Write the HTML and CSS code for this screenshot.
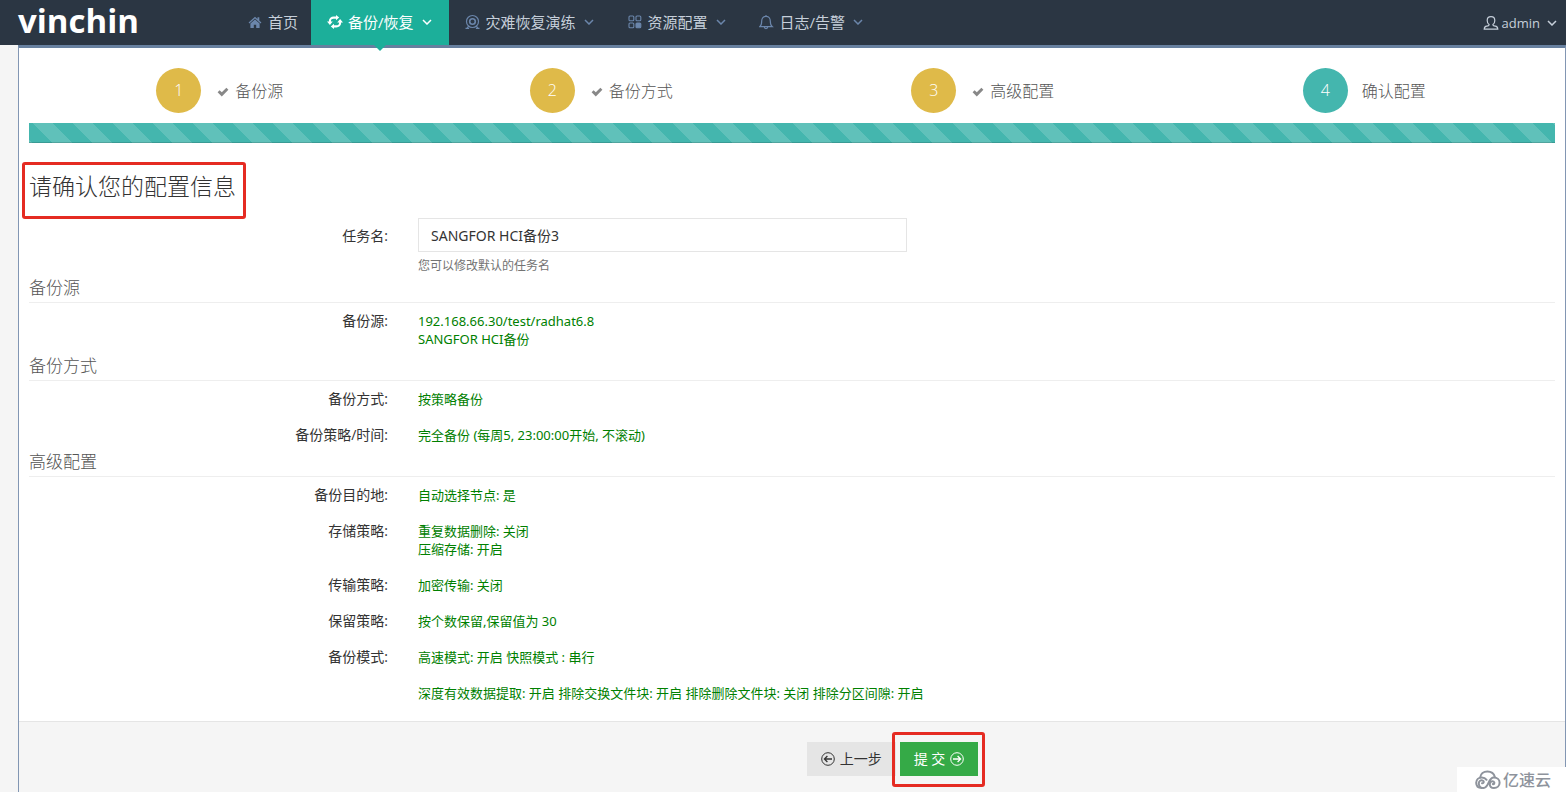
FILE: index.html
```html
<!DOCTYPE html>
<html lang="zh-CN">
<head>
<meta charset="utf-8">
<meta name="viewport" content="width=device-width, initial-scale=1">
<title>vinchin</title>
<link rel="stylesheet" href="styles.css">
</head>
<body>
<svg class="defs" aria-hidden="true">
  <symbol id="chev" viewBox="0 0 10 6"><path d="M1 1l4 4 4-4" fill="none" stroke="currentColor" stroke-width="1.5"/></symbol>
  <symbol id="check" viewBox="0 0 12 10"><path d="M0.6 5.2L2.6 3.2L4.8 5.3L9.4 0.7L11.4 2.7L4.8 9.4Z" fill="currentColor"/></symbol>
</svg>
<header class="topbar">
  <a class="logo" href="#">vinchin</a>
  <nav class="menu">
    <a class="menu-item home" href="#">
      <svg class="icon" viewBox="0 0 16 16"><path d="M7 2.8L0.6 8.4L1.4 9.4L7 4.6L12.6 9.4L13.4 8.4L11.3 6.5V3.2H9.5V5ZM7 5.6L2.4 9.6V14H5.8V10.8H8.2V14H11.6V9.6Z" fill="currentColor"/></svg>
      <span>首页</span>
    </a>
    <a class="menu-item active" href="#">
      <svg class="icon" viewBox="0 0 16 16"><path d="M2.9 8.2V7C2.9 4.8 4.6 3.6 6.6 3.6H9.6M13.1 7.8V9C13.1 11.2 11.4 12.4 9.4 12.4H6.4" fill="none" stroke="currentColor" stroke-width="2.1"/><path d="M0 7.6H5.8L2.9 11ZM16 8.4H10.2L13.1 5ZM9 1V6.2L12.2 3.6ZM7 15V9.8L3.8 12.4Z" fill="currentColor"/></svg>
      <span>备份/恢复</span>
      <svg class="chev"><use href="#chev"/></svg>
    </a>
    <a class="menu-item" href="#">
      <svg class="icon" viewBox="0 0 16 16" fill="none" stroke="currentColor" stroke-width="1.2"><circle cx="7.5" cy="7.5" r="6"/><circle cx="7.5" cy="7.5" r="2.8" stroke-width="1.6"/><path d="M3.7 12L1.9 14.4M11.3 12L13.1 14.4M0.5 14.4H4.1M10.9 14.4H14.5"/></svg>
      <span>灾难恢复演练</span>
      <svg class="chev"><use href="#chev"/></svg>
    </a>
    <a class="menu-item" href="#">
      <svg class="icon" viewBox="0 0 16 16" fill="none" stroke="currentColor" stroke-width="1.1"><rect x="2" y="2" width="4.8" height="4.8" rx="1"/><rect x="9" y="2" width="4.8" height="4.8" rx="1"/><rect x="2" y="9" width="4.8" height="4.8" rx="1"/><rect x="9" y="9" width="4.8" height="4.8" rx="1" fill="currentColor"/></svg>
      <span>资源配置</span>
      <svg class="chev"><use href="#chev"/></svg>
    </a>
    <a class="menu-item" href="#">
      <svg class="icon" viewBox="0 0 16 16" fill="none" stroke="currentColor" stroke-width="1.2"><path d="M0.9 12.6C2.5 11.4 2.7 9.6 2.7 7C2.7 4.2 4.4 2.3 7 2.3S11.3 4.2 11.3 7C11.3 9.6 11.5 11.4 13.1 12.6ZM7 2.3V1M5.2 12.8C5.4 15.3 8.6 15.3 8.8 12.8"/></svg>
      <span>日志/告警</span>
      <svg class="chev"><use href="#chev"/></svg>
    </a>
  </nav>
  <a class="user" href="#">
    <svg class="icon" viewBox="0 0 16 16" fill="none" stroke="currentColor" stroke-width="1.2"><path d="M6.1 9.6C4.8 8.7 4.2 7.2 4.2 5.4C4.2 3 5.7 1.6 8 1.6S11.8 3 11.8 5.4C11.8 7.2 11.2 8.7 9.9 9.6C9.8 10.6 10.6 11 12.4 11.2C14 11.4 14.6 12 14.8 14.2H1.2C1.4 12 2 11.4 3.6 11.2C5.4 11 6.2 10.6 6.1 9.6Z"/></svg>
    <span>admin</span>
    <svg class="chev"><use href="#chev"/></svg>
  </a>
</header>

<main class="wizard">
  <div class="body">
    <ol class="steps">
      <li class="step"><span class="num">1</span><svg class="check"><use href="#check"/></svg><span>备份源</span></li>
      <li class="step"><span class="num">2</span><svg class="check"><use href="#check"/></svg><span>备份方式</span></li>
      <li class="step"><span class="num">3</span><svg class="check"><use href="#check"/></svg><span>高级配置</span></li>
      <li class="step current"><span class="num">4</span><span>确认配置</span></li>
    </ol>
    <div class="progress"></div>

    <h3 class="title"><span class="marked">请确认您的配置信息</span></h3>

    <form id="confirm">
      <div class="row name-row">
        <label class="label" for="task">任务名:</label>
        <div class="value">
          <input class="text" id="task" type="text" value="SANGFOR HCI备份3">
          <p class="help">您可以修改默认的任务名</p>
        </div>
      </div>

      <h4 class="section">备份源</h4>
      <div class="row"><div class="label">备份源:</div><div class="value">192.168.66.30/test/radhat6.8<br>SANGFOR HCI备份</div></div>

      <h4 class="section">备份方式</h4>
      <div class="row"><div class="label">备份方式:</div><div class="value">按策略备份</div></div>
      <div class="row"><div class="label">备份策略/时间:</div><div class="value">完全备份 (每周5, 23:00:00开始, 不滚动)</div></div>

      <h4 class="section">高级配置</h4>
      <div class="row"><div class="label">备份目的地:</div><div class="value">自动选择节点: 是</div></div>
      <div class="row"><div class="label">存储策略:</div><div class="value">重复数据删除: 关闭<br>压缩存储: 开启</div></div>
      <div class="row"><div class="label">传输策略:</div><div class="value">加密传输: 关闭</div></div>
      <div class="row"><div class="label">保留策略:</div><div class="value">按个数保留,保留值为 30</div></div>
      <div class="row"><div class="label">备份模式:</div><div class="value">高速模式: 开启 快照模式 : 串行</div></div>
      <div class="row"><div class="label"></div><div class="value">深度有效数据提取: 开启 排除交换文件块: 开启 排除删除文件块: 关闭 排除分区间隙: 开启</div></div>
    </form>
  </div>
  <footer class="actions">
    <button class="btn" type="button">
      <svg class="arrow" viewBox="0 0 14 14" fill="none" stroke="currentColor"><circle cx="7" cy="7" r="6.3"/><path d="M11 7H3.4M6.4 4L3.4 7L6.4 10" stroke-width="1.3"/></svg>
      <span>上一步</span>
    </button>
    <span class="marked">
      <button class="btn submit" type="submit" form="confirm">
        <span>提 交</span>
        <svg class="arrow" viewBox="0 0 14 14" fill="none" stroke="currentColor"><circle cx="7" cy="7" r="6.3"/><path d="M3 7H10.6M7.6 4L10.6 7L7.6 10" stroke-width="1.3"/></svg>
      </button>
    </span>
  </footer>
</main>

<div class="brand">
  <svg class="cloud" viewBox="0 0 26 20" fill="none" stroke="currentColor" stroke-width="2" stroke-linecap="round"><path d="M5.2 7.4C5.6 3.8 8.6 1.4 12.4 1.4C16.2 1.4 19 3.6 19.8 6.8"/><path d="M7 13.2C8.6 13.6 9.6 11.6 7.8 10.6C5.8 9.6 3.8 11 3.8 13.4C3.8 16 6 18 8.6 18C14 18 13 7.6 18.8 7.6C22.2 7.6 24.6 9.8 24.6 12.8C24.6 16 22 18 19 18C16.4 18 14.8 16.4 14.8 14.2C14.8 11.8 17 10.6 18.6 11.6C20.2 12.8 19 14.6 17.8 14"/><path d="M11.6 9.8C10.6 8.4 8.8 7.4 6.8 7.4C3.6 7.4 1.2 9.8 1.2 12.8C1.2 15.6 3 18 6.8 18"/></svg>
  <span>亿速云</span>
</div>
</body>
</html>
```
FILE: styles.css
```css
* {
  box-sizing: border-box;
}

body {
  margin: 0;
  min-height: 100vh;
  display: flex;
  flex-direction: column;
  background: #f5f5f5;
  color: #333;
  font: 14px/18px "Open Sans", "Noto Sans CJK SC", sans-serif;
}

a {
  color: inherit;
  text-decoration: none;
}

.defs {
  position: absolute;
  width: 0;
  height: 0;
}

/* top bar */
.topbar {
  display: flex;
  height: 45px;
  background: #2b3643;
}

.logo {
  width: 236px;
  padding-left: 18px;
  color: #fff;
  font-size: 33px;
  font-weight: 700;
  line-height: 42px;
}

.menu {
  display: flex;
}

.menu-item {
  display: flex;
  align-items: center;
  padding: 0 17px 2px 16px;
  color: #c6cfda;
  font-size: 15px;
}

.menu-item.home {
  padding: 0 13px 2px 12px;
}

.icon {
  width: 16px;
  height: 16px;
  margin-right: 5px;
  color: #6b86ab;
}

.home .icon {
  margin-right: 4px;
}

.chev {
  width: 10px;
  height: 6px;
  margin-left: 8px;
  color: #6b86ab;
}

.menu-item.active {
  position: relative;
  background: #1caf9a;
  color: #fff;
}

.active .icon,
.active .chev {
  color: #fff;
}

.menu-item.active::after {
  content: "";
  position: absolute;
  left: 50%;
  top: 100%;
  margin-left: -6px;
  border: 6px solid transparent;
  border-top-color: #1caf9a;
  border-bottom: 0;
}

.user {
  display: flex;
  align-items: center;
  margin-left: auto;
  padding-right: 9px;
  color: #c6cfda;
  font-size: 13px;
}

.user .icon {
  margin-right: 3px;
}

.user .icon,
.user .chev {
  color: #c6cfda;
}

.user .chev {
  margin-left: 7px;
}

/* wizard */
.wizard {
  flex: 1;
  display: flex;
  flex-direction: column;
  margin-left: 18px;
  border: 1px solid #8296b3;
  border-top: 3px solid #67809f;
  border-bottom: 0;
  background: #fff;
}

.body {
  padding: 20px 10px 10px;
}

.steps {
  display: grid;
  grid-template-columns: repeat(4, 1fr);
  margin: 0 0 10px;
  padding: 0;
  list-style: none;
}

.step {
  display: flex;
  align-items: center;
  justify-content: center;
  color: #555;
  font-size: 16px;
  font-weight: 300;
}

.num {
  width: 45px;
  margin-right: 16px;
  border-radius: 50%;
  background: #dfba49;
  color: #fff;
  line-height: 45px;
  text-align: center;
}

.current .num {
  margin-right: 14px;
  background: #44b6ae;
}

.check {
  width: 12px;
  height: 10px;
  margin: 3px 6px 0 0;
  color: #888;
}

.progress {
  height: 20px;
  margin-bottom: 28px;
  background: linear-gradient(45deg, rgba(255, 255, 255, .15) 25%, transparent 25%, transparent 50%, rgba(255, 255, 255, .15) 50%, rgba(255, 255, 255, .15) 75%, transparent 75%) 4px 0 / 40px 40px #44b6ae;
  box-shadow: inset 0 -1px 0 rgba(0, 0, 0, .15);
}

.title {
  margin: 0 0 17px;
  font-size: 23px;
  font-weight: 300;
  line-height: 30px;
}

.marked {
  display: inline-block;
  position: relative;
}

.marked::after {
  content: "";
  position: absolute;
  inset: -10px -7px -11px -8px;
  border: 3px solid #e52b22;
  border-radius: 3px;
  pointer-events: none;
}

.title .marked::after {
  inset: -9px -10px -18px -7px;
}

.row {
  display: grid;
  grid-template-columns: 1fr 3fr;
  margin: 0 -15px;
  padding: 9px 0;
}

.label,
.value {
  padding: 0 15px;
}

.label {
  text-align: right;
}

.value {
  color: #008000;
  font-family: "Noto Sans", "Noto Sans CJK SC", sans-serif;
  font-size: 13px;
}

.name-row {
  padding: 0 0 4px;
}

.name-row .label {
  padding-top: 9px;
}

.text {
  display: block;
  width: 43%;
  height: 34px;
  padding: 6px 12px;
  border: 1px solid #e5e5e5;
  background: #fff;
  color: #333;
  font: inherit;
  font-size: 14px;
}

.help {
  margin: 5px 0 0;
  color: #737373;
  font-size: 12px;
}

.section {
  margin: 0;
  padding-bottom: 5px;
  border-bottom: 1px solid #eee;
  color: #555;
  font-size: 17px;
  font-weight: 300;
  line-height: 18px;
}

.actions {
  flex: 1;
  display: flex;
  justify-content: center;
  align-items: flex-start;
  gap: 4px;
  padding: 20px 0 16px 13%;
  border-top: 1px solid #e5e5e5;
  background: #f5f5f5;
}

.btn {
  display: flex;
  align-items: center;
  gap: 5px;
  height: 34px;
  padding: 0 14px;
  border: 0;
  background: #e5e5e5;
  color: #333;
  font: inherit;
}

.submit {
  background: #35aa47;
  color: #fff;
}

.arrow {
  width: 14px;
  height: 14px;
}

/* corner brand */
.brand {
  position: fixed;
  right: 0;
  bottom: 0;
  display: flex;
  align-items: center;
  gap: 2px;
  width: 109px;
  height: 25px;
  padding-left: 18px;
  background: #fff;
  color: #8e939c;
  font-size: 16px;
  font-weight: 500;
}

.cloud {
  width: 26px;
  height: 20px;
}
```
